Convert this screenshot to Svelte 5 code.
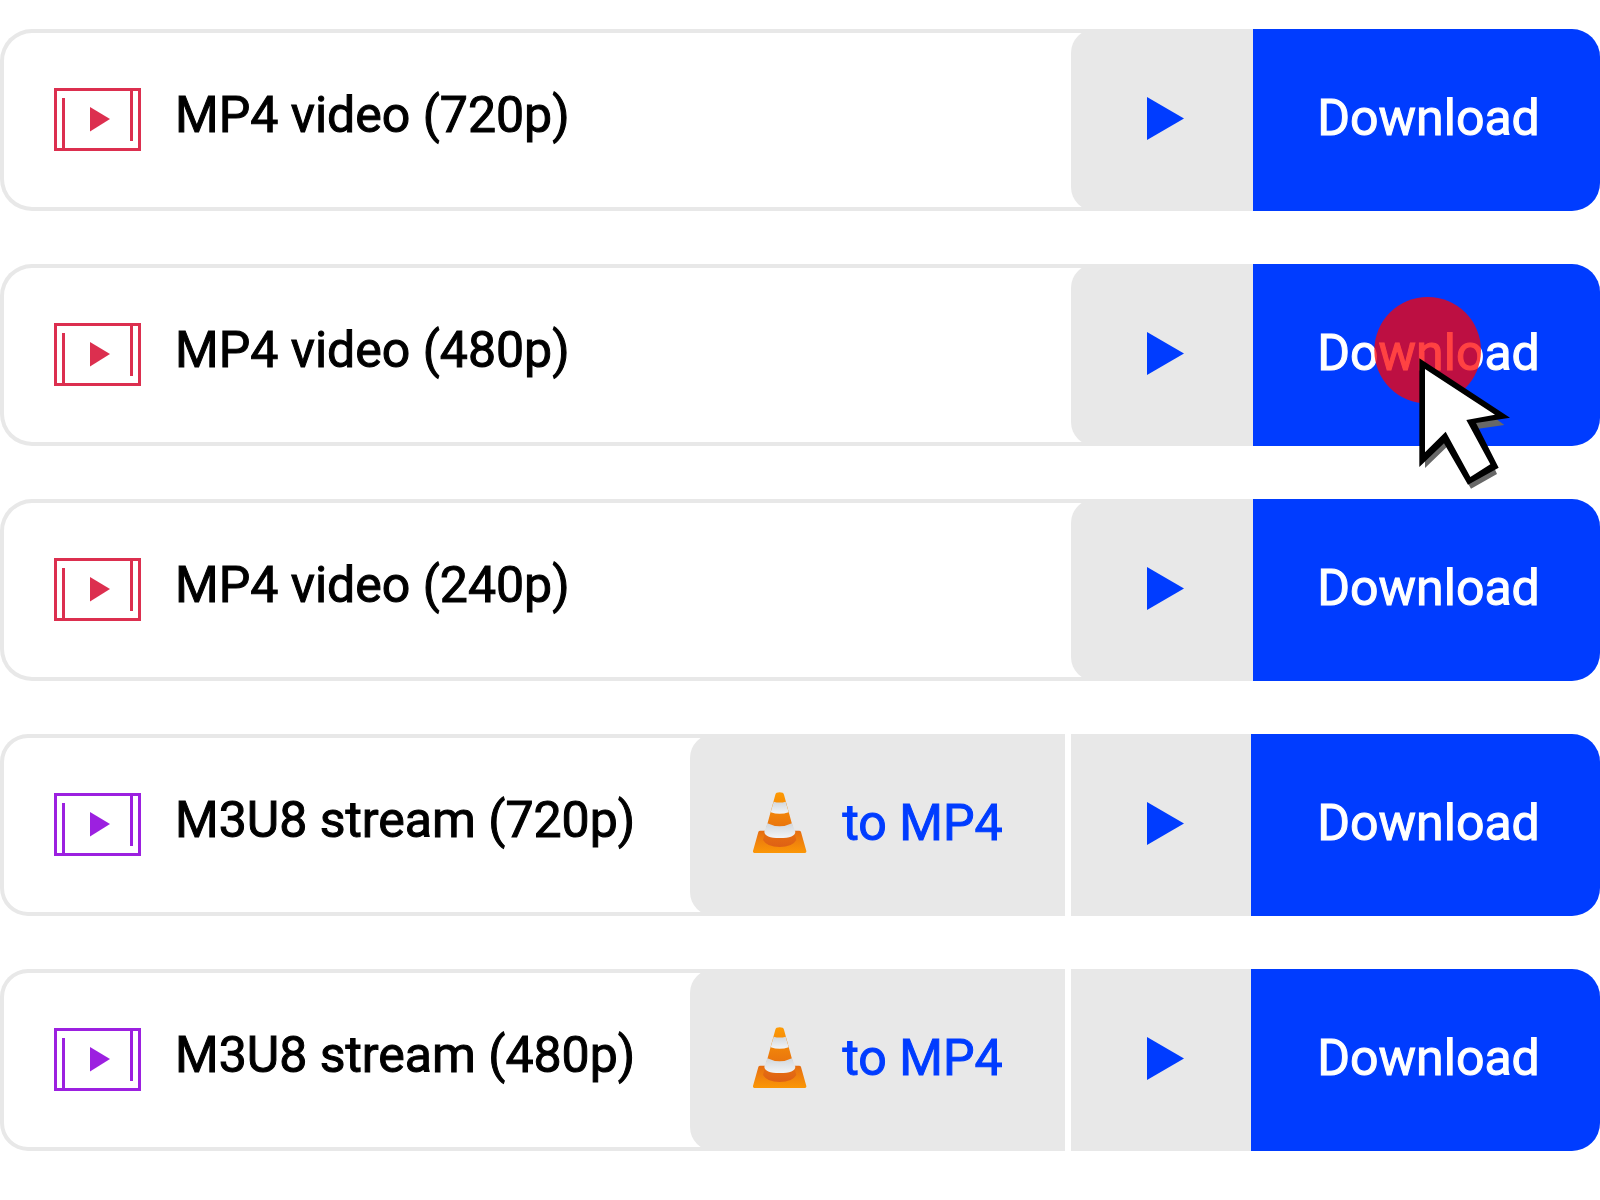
<script>
  const sources = [
    { name: 'MP4 video (720p)', kind: 'mp4' },
    { name: 'MP4 video (480p)', kind: 'mp4', pressed: true },
    { name: 'MP4 video (240p)', kind: 'mp4' },
    { name: 'M3U8 stream (720p)', kind: 'stream' },
    { name: 'M3U8 stream (480p)', kind: 'stream' },
  ];
</script>

<main>
  {#each sources as source}
    <section class="row {source.kind}">
      <div class="label">
        <svg class="film" viewBox="0 0 87 63" aria-hidden="true">
          <path d="M1.5 1.5H85.5V61.5H1.5ZM9.5 10V61M77.5 2V53" fill="none" stroke="currentColor" stroke-width="3" />
          <path d="M36 19L56 31L36 43.5Z" fill="currentColor" />
        </svg>
        <span>{source.name}</span>
      </div>
      <div class="actions">
        {#if source.kind === 'stream'}
          <button class="convert">
            <svg class="cone" viewBox="36 36 165 183" aria-hidden="true">
              <defs>
                <linearGradient id="base" x2="0" y2="1">
                  <stop stop-color="#e56d12" />
                  <stop offset="1" stop-color="#fb9706" />
                </linearGradient>
                <linearGradient id="body" x2="0" y2="1">
                  <stop stop-color="#fd9a03" />
                  <stop offset="1" stop-color="#de6015" />
                </linearGradient>
                <linearGradient id="stripe" x2="0" y2="1">
                  <stop stop-color="#d2d7dc" />
                  <stop offset="1" stop-color="#f1f4f7" />
                </linearGradient>
              </defs>
              <path d="M61 152H177Q182 152 183 156L199 213Q200 219 195 219H43Q38 219 39 213L55 156Q56 152 61 152Z" fill="url(#base)" />
              <path d="M110 38Q119 35 128 38Q131 40 132 44L169 180Q157 201 119 201Q81 201 69 180L106 44Q107 40 110 38Z" fill="url(#body)" />
              <path d="M101 65Q119 70 137 65L146 97Q119 106 92 97Z" fill="url(#stripe)" />
              <path d="M82 130Q119 148 156 130L166 155Q166 174 119 174Q74 174 73 155Z" fill="url(#stripe)" />
            </svg>
            <span>to MP4</span>
          </button>
        {/if}
        <button class="play" aria-label="Play {source.name}">
          <svg viewBox="0 0 37 43" aria-hidden="true"><path d="M0 0L37 21.5L0 43Z" fill="currentColor" /></svg>
        </button>
        <button class="download">
          Download
          {#if source.pressed}
            <svg class="pointer" viewBox="210 30 450 630" aria-hidden="true">
              <circle cx="383" cy="211" r="160" fill="#ff0000" fill-opacity="0.74" />
              <path d="M375 258L613 435L530 447L591 582L513 626L441 500L375 564Z" fill="#686868" />
              <path d="M358 235L630 413L528 429L596 563L504 614L432 490L358 561Z" fill="#000" />
              <path d="M375 267L585 404L499 420L571 553L511 591L437 455L375 517Z" fill="#fff" />
            </svg>
          {/if}
        </button>
      </div>
    </section>
  {/each}
</main>

<style>
  :global(body) {
    margin: 0;
    background: #fff;
  }
  main {
    display: flex;
    flex-direction: column;
    gap: 53px;
    padding: 29px 0 48px;
    font: 400 50px/60px Roboto, sans-serif;
  }
  .row {
    display: flex;
    align-items: stretch;
    height: 182px;
    border-radius: 32px 28px 28px 32px;
    box-shadow: inset 0 0 0 4px #e8e8e8;
  }
  .stream {
    border-radius: 28px;
  }
  .label {
    flex: 1;
    display: flex;
    align-items: center;
    gap: 34px;
    padding: 0 0 2px 54px;
    white-space: nowrap;
    color: #000;
  }
  .label span {
    padding-bottom: 8px;
    -webkit-text-stroke: 1px currentColor;
  }
  .film {
    width: 87px;
    height: 63px;
    flex: none;
    color: #dc2f4f;
  }
  .stream .film {
    color: #9c20e0;
  }
  .actions {
    display: flex;
  }
  button {
    display: flex;
    align-items: center;
    justify-content: center;
    margin: 0;
    border: 0;
    font: inherit;
    -webkit-text-stroke: 1px currentColor;
    color: #003cff;
    background: #e8e8e8;
    cursor: pointer;
  }
  .play {
    width: 182px;
    padding: 0 0 3px 6px;
    border-radius: 24px 0 0 24px;
  }
  .play svg {
    width: 37px;
    height: 43px;
  }
  .stream .play {
    width: 180px;
    padding-left: 8px;
    border-radius: 0;
  }
  .convert {
    width: 381px;
    gap: 35px;
    padding: 0 0 4px;
    border-right: 6px solid #fff;
    border-radius: 24px 0 0 24px;
  }
  .cone {
    width: 55px;
    height: 61px;
    padding-bottom: 2px;
  }
  .download {
    position: relative;
    width: 347px;
    padding: 0 0 4px 4px;
    color: #fff;
    background: #003cff;
    border-radius: 0 28px 28px 0;
  }
  .stream .download {
    width: 349px;
    padding-left: 6px;
  }
  .pointer {
    position: absolute;
    top: 26px;
    right: 80px;
    width: 150px;
    height: 210px;
    z-index: 1;
    pointer-events: none;
  }
</style>
